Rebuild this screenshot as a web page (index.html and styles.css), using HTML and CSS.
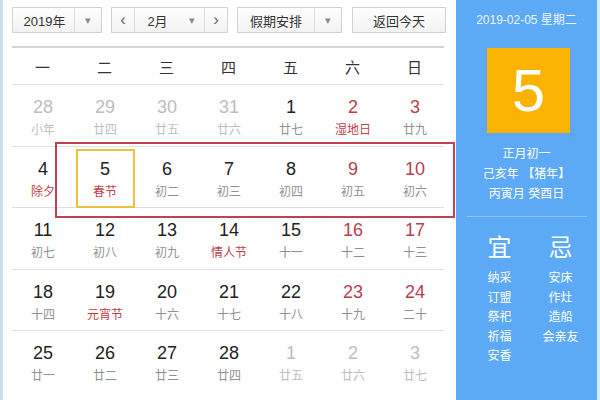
FILE: index.html
```html
<!DOCTYPE html>
<html lang="zh-CN">
<head>
<meta charset="utf-8">
<title>万年历</title>
<link rel="stylesheet" href="styles.css">
</head>
<body>
<div class="page">
  <div class="main">
    <div class="toolbar">
      <div class="ctl year"><span class="label">2019年</span><span class="drop">▾</span></div>
      <div class="ctl month"><span class="nav">‹</span><span class="label">2月</span><span class="drop">▾</span><span class="nav">›</span></div>
      <div class="ctl holiday"><span class="label">假期安排</span><span class="drop">▾</span></div>
      <div class="ctl today"><span class="label">返回今天</span></div>
    </div>
    <div class="weekdays">
      <span>一</span><span>二</span><span>三</span><span>四</span><span>五</span><span>六</span><span>日</span>
    </div>
    <div class="grid">
      <div class="row">
        <div class="cell other"><b>28</b><i>小年</i></div>
        <div class="cell other"><b>29</b><i>廿四</i></div>
        <div class="cell other"><b>30</b><i>廿五</i></div>
        <div class="cell other"><b>31</b><i>廿六</i></div>
        <div class="cell"><b>1</b><i>廿七</i></div>
        <div class="cell wk"><b>2</b><i class="fest">湿地日</i></div>
        <div class="cell wk"><b>3</b><i>廿九</i></div>
      </div>
      <div class="row">
        <div class="cell"><b>4</b><i class="fest">除夕</i></div>
        <div class="cell"><b>5</b><i class="fest">春节</i></div>
        <div class="cell"><b>6</b><i>初二</i></div>
        <div class="cell"><b>7</b><i>初三</i></div>
        <div class="cell"><b>8</b><i>初四</i></div>
        <div class="cell wk"><b>9</b><i>初五</i></div>
        <div class="cell wk"><b>10</b><i>初六</i></div>
      </div>
      <div class="row">
        <div class="cell"><b>11</b><i>初七</i></div>
        <div class="cell"><b>12</b><i>初八</i></div>
        <div class="cell"><b>13</b><i>初九</i></div>
        <div class="cell"><b>14</b><i class="fest">情人节</i></div>
        <div class="cell"><b>15</b><i>十一</i></div>
        <div class="cell wk"><b>16</b><i>十二</i></div>
        <div class="cell wk"><b>17</b><i>十三</i></div>
      </div>
      <div class="row">
        <div class="cell"><b>18</b><i>十四</i></div>
        <div class="cell"><b>19</b><i class="fest">元宵节</i></div>
        <div class="cell"><b>20</b><i>十六</i></div>
        <div class="cell"><b>21</b><i>十七</i></div>
        <div class="cell"><b>22</b><i>十八</i></div>
        <div class="cell wk"><b>23</b><i>十九</i></div>
        <div class="cell wk"><b>24</b><i>二十</i></div>
      </div>
      <div class="row last">
        <div class="cell"><b>25</b><i>廿一</i></div>
        <div class="cell"><b>26</b><i>廿二</i></div>
        <div class="cell"><b>27</b><i>廿三</i></div>
        <div class="cell"><b>28</b><i>廿四</i></div>
        <div class="cell other"><b>1</b><i>廿五</i></div>
        <div class="cell other"><b>2</b><i>廿六</i></div>
        <div class="cell other"><b>3</b><i>廿七</i></div>
      </div>
      <div class="redbox"></div>
      <div class="todaybox"></div>
    </div>
  </div>
  <div class="side">
    <div class="date">2019-02-05 星期二</div>
    <div class="bigday">5</div>
    <div class="lunar">
      <div>正月初一</div>
      <div>己亥年 【猪年】</div>
      <div>丙寅月 癸酉日</div>
    </div>
    <div class="yiji">
      <div class="col">
        <div class="head">宜</div>
        <div>纳采</div><div>订盟</div><div>祭祀</div><div>祈福</div><div>安香</div>
      </div>
      <div class="col">
        <div class="head">忌</div>
        <div>安床</div><div>作灶</div><div>造船</div><div>会亲友</div>
      </div>
    </div>
  </div>
  <div class="edge"></div>
</div>
</body>
</html>
```
FILE: styles.css
```css
html, body {
  margin: 0;
  padding: 0;
  background: #fff;
  font-family: "Liberation Sans", "Noto Sans CJK SC", sans-serif;
}
.page {
  display: flex;
  width: 600px;
  height: 400px;
  overflow: hidden;
}
.main {
  width: 453px;
  flex: none;
  border-left: 3px solid #c4e0ee;
  padding-left: 9px;
  box-sizing: border-box;
}
.toolbar {
  display: flex;
  padding-top: 7px;
  height: 26px;
  width: 434px;
}
.ctl {
  display: flex;
  align-items: center;
  height: 26px;
  box-sizing: border-box;
  border: 1px solid #d2d2d2;
  background: linear-gradient(#ffffff, #f3f3f3);
  color: #333;
  font-size: 13px;
}
.ctl .label { flex: 1; text-align: center; }
.ctl .drop {
  width: 26px;
  height: 100%;
  border-left: 1px solid #dcdcdc;
  display: flex;
  align-items: center;
  justify-content: center;
  color: #888;
  font-size: 11px;
}
.year { width: 90px; }
.year .label { padding-left: 2px; }
.month { width: 117px; margin-left: 9px; }
.month .nav {
  width: 22px;
  height: 100%;
  display: flex;
  align-items: center;
  justify-content: center;
  color: #666;
  font-size: 17px;
}
.month .nav:first-child { border-right: 1px solid #dcdcdc; }
.month .nav:last-child { border-left: 1px solid #dcdcdc; }
.month .drop { border-left: none; width: 24px; }
.holiday { width: 105px; margin-left: 9px; }
.today { width: 94px; margin-left: 10px; }
.weekdays {
  margin-top: 13px;
  border-top: 2px solid #d6d6d6;
  border-bottom: 1px solid #e0e0e0;
  width: 432px;
  display: grid;
  grid-template-columns: repeat(7, 62px);
  height: 36px;
  align-items: center;
  font-size: 15px;
  color: #333;
}
.weekdays span { text-align: center; margin-left: -1px; }
.grid {
  position: relative;
  width: 434px;
}
.row {
  display: grid;
  grid-template-columns: repeat(7, 62px);
  height: 61.5px;
  box-sizing: border-box;
  border-bottom: 1px solid #dedede;
  margin-right: 2px;
}
.row.last { border-bottom: none; }
.cell {
  display: flex;
  flex-direction: column;
  align-items: center;
  padding-top: 12px;
}
.cell b {
  font-weight: normal;
  font-size: 18px;
  line-height: 20px;
  color: #222;
}
.cell i {
  font-style: normal;
  font-size: 12px;
  line-height: 16px;
  margin-top: 5px;
  color: #909090;
}
.cell.wk b { color: #b5424d; }
.cell.other b { color: #bdbdbd; }
.cell.other i { color: #bdbdbd; }
.cell i.fest { color: #c23e4a; }
.redbox {
  position: absolute;
  left: 43px;
  top: 57px;
  width: 400px;
  height: 76px;
  box-sizing: border-box;
  border: 2px solid #c04250;
}
.todaybox {
  position: absolute;
  left: 64px;
  top: 64px;
  width: 59px;
  height: 59px;
  box-sizing: border-box;
  border: 2px solid #eec13a;
}
.side {
  width: 141px;
  flex: none;
  margin-left: 3px;
  background: #5ca9f6;
  color: #fff;
  display: flex;
  flex-direction: column;
  align-items: center;
}
.date {
  margin-top: 12px;
  font-size: 12px;
  line-height: 16px;
  color: #eef6ff;
}
.bigday {
  margin-top: 20px;
  width: 83px;
  height: 85px;
  background: #f9b300;
  font-size: 60px;
  line-height: 85px;
  text-align: center;
  color: #fff;
  margin-left: 4px;
}
.lunar {
  margin-top: 11px;
  font-size: 12px;
  line-height: 20px;
  text-align: center;
  padding-bottom: 12px;
  border-bottom: 1px solid #8ec4f8;
  width: 120px;
}
.yiji {
  display: flex;
  gap: 23px;
  margin-top: 17px;
  padding-left: 7px;
  font-size: 12px;
  line-height: 19.5px;
}
.yiji .col {
  display: flex;
  flex-direction: column;
  align-items: center;
  width: 38px;
}
.yiji .head {
  font-size: 24px;
  line-height: 28px;
  margin-bottom: 7px;
}
.edge {
  width: 3px;
  flex: none;
  background: #d6ebfb;
}
```
